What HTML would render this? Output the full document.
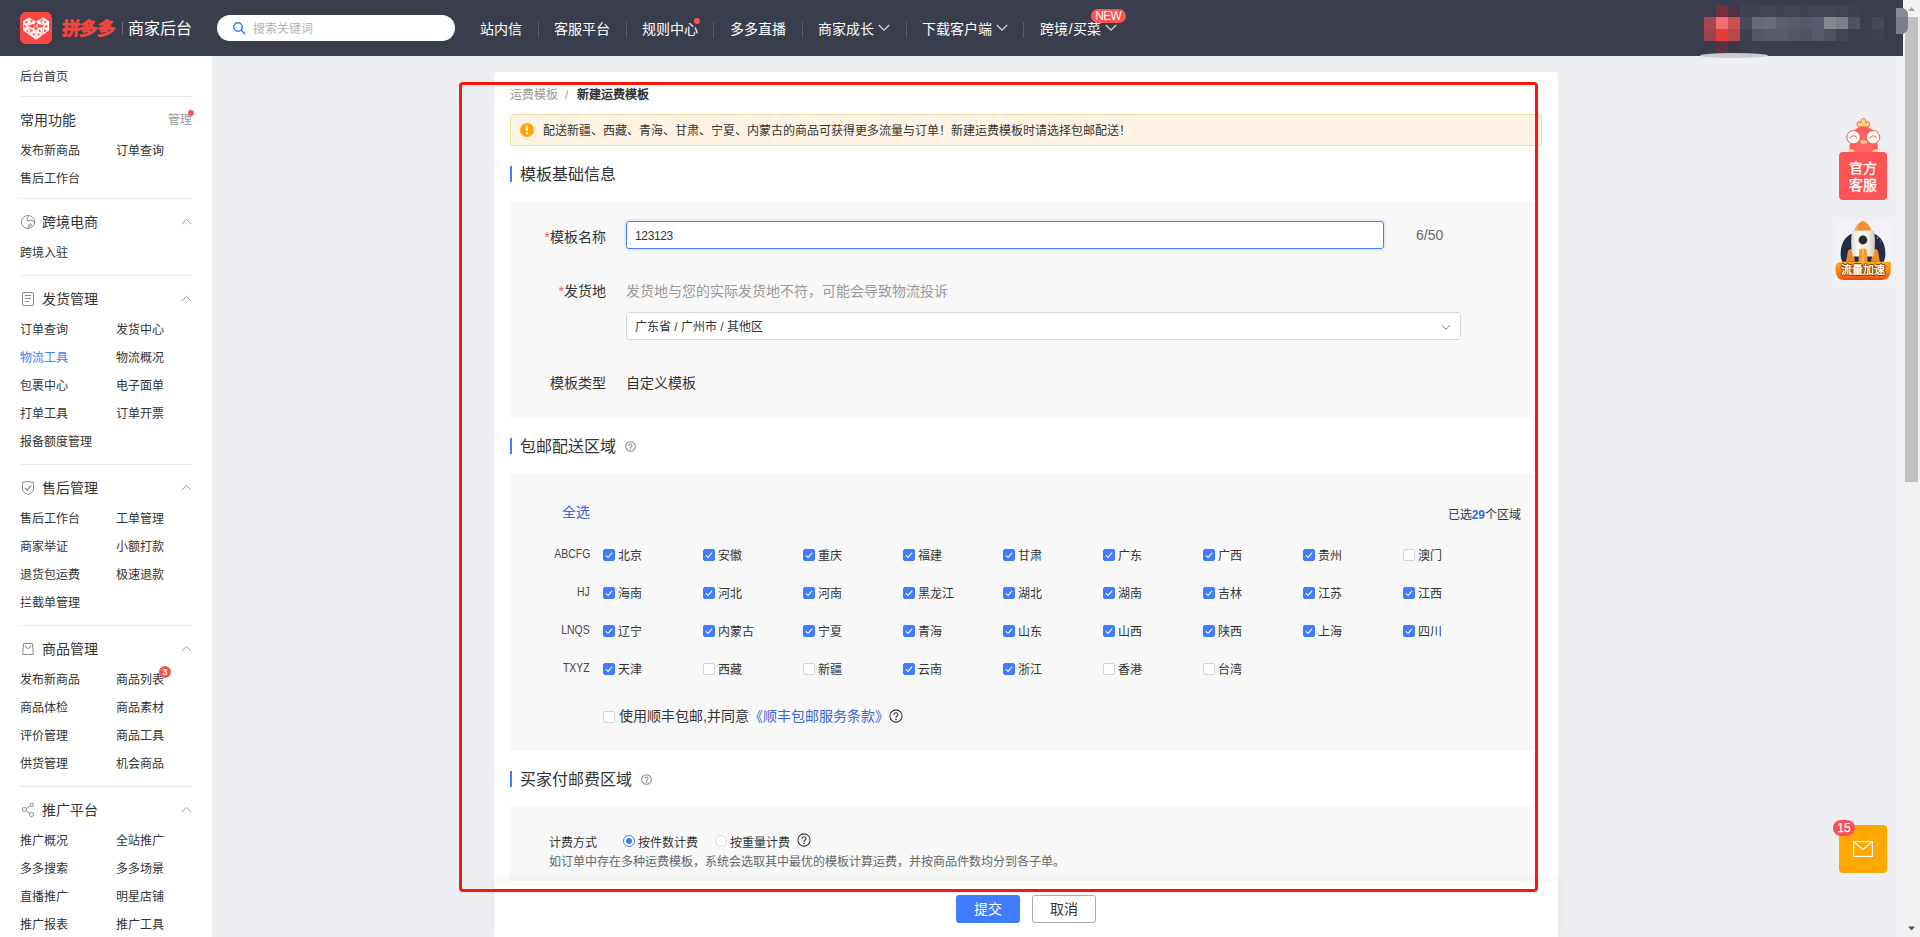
<!DOCTYPE html>
<html lang="zh-CN"><head><meta charset="utf-8"><title>新建运费模板</title>
<style>
*{box-sizing:border-box;margin:0;padding:0}
html,body{width:1920px;height:937px;overflow:hidden;background:#eeeff3}
body{position:relative;font-family:"Liberation Sans",sans-serif;font-size:12px;color:#333}
.t{position:absolute;white-space:nowrap}
.abs{position:absolute}
#top{position:absolute;left:0;top:0;width:1903px;height:56px;background:#3a3d4b}
#side{position:absolute;left:0;top:56px;width:212px;height:881px;background:#fff}
.hr{position:absolute;left:20px;width:172px;height:1px;background:#ebebeb}
#card{position:absolute;left:494px;top:72px;width:1064px;height:900px;background:#fff;border-radius:4px}
.panel{position:absolute;left:510px;width:1025px;background:#f8f8f9}
.bar{position:absolute;left:510px;width:2px;height:16px;background:#407cff}
.cb{position:absolute;width:12px;height:12px;border-radius:2px;background:#fff;border:1px solid #d4d4d4}
.cb.on{background:#407cff;border-color:#407cff}
.cb svg{position:absolute;left:-1px;top:-1px;width:12px;height:12px}
.sep{position:absolute;top:22px;width:1px;height:16px;background:#585b69}
</style></head><body>
<div id="top">
<div class="abs" style="left:20px;top:12px;width:32px;height:32px;border-radius:6px;background:#fb4744"></div>
<svg class="abs" style="left:20px;top:12px" width="32" height="32" viewBox="0 0 32 32"><path d="M3 9.3 L8.8 5.2 L16.1 9.7 L23.1 5.2 L29.1 9.3 L29.1 18.2 L16.1 27.8 L3 18.2 Z" fill="#fff"/><g fill="#fb4744"><path d="M16.1 9.6 L20 14 L16.1 18.2 L12.2 14 Z"/><path d="M13 11.8 L8.4 14 L13 16.2 Z M19.2 11.8 L23.8 14 L19.2 16.2 Z"/><g opacity=".92"><path d="M5.6 8.4 L8.2 10.8 L5.2 11.4Z M10.6 7.4 L13.2 8.6 L10.8 11Z M20 8.6 L22 7.6 L21.6 11Z M24 8.2 L26.8 9.6 L24.6 11.6Z"/><path d="M3.8 12.8 L7 14.2 L4 15.8Z M25.2 12.8 L28.4 14.2 L25.4 15.8Z"/><path d="M5.8 19 L8.2 17 L7.6 20.4Z M10.2 17 L12.8 18.6 L10.2 20.4Z M19.8 16.6 L21.2 20.4 L18.8 19.6Z M24 17 L27 18.6 L24.4 20.6Z"/><path d="M12.4 21 L15.4 21.4 L13.6 24Z M17.2 22 L19.8 21 L18.8 24.4Z"/></g></g><path d="M9.2 5.6 V22.4 M22.6 5.6 V22.4 M16.1 18 V27" stroke="#fb4744" stroke-width=".8" opacity=".5"/><path d="M5 9 L13 19 M27 9 L19 19 M4 17.5 L12 9.5 M28 17.5 L20 9.5 M9 22 L15 17.5 M23 22 L17 17.5" stroke="#fb4744" stroke-width=".6" opacity=".45"/><path d="M14.6 12.4 V15.8 M15.9 12.8 H18 M15.9 14.6 H18 M16.5 12.2 V16 M17.5 12.2 V16" stroke="#fff" stroke-width=".6" opacity=".8"/></svg>
<div class="t " style="left:61.5px;top:17px;height:24px;line-height:24px;font-size:18px;color:#f6443f;font-weight:900;letter-spacing:-0.2px;-webkit-text-stroke:0.8px #f6443f;transform:skewX(-3deg);transform-origin:left center;">拼多多</div>
<div class="abs" style="left:122px;top:22px;width:1px;height:13px;background:#6b6e7b"></div>
<div class="t " style="left:128px;top:17px;height:24px;line-height:24px;font-size:16px;color:#fff;">商家后台</div>
<div class="abs" style="left:217px;top:15px;width:238px;height:26px;border-radius:13px;background:#fff"></div>
<svg class="abs" style="left:232px;top:21px" width="14" height="14" viewBox="0 0 14 14"><circle cx="6" cy="6" r="4.3" fill="none" stroke="#3f7cf5" stroke-width="1.5"/><path d="M9.2 9.2 L12.6 12.6" stroke="#3f7cf5" stroke-width="1.6" stroke-linecap="round"/></svg>
<div class="t " style="left:253px;top:19px;height:20px;line-height:20px;font-size:12px;color:#b3b3b3;">搜索关键词</div>
<div class="t " style="left:480px;top:17px;height:24px;line-height:24px;font-size:14px;color:#fff;">站内信</div>
<div class="t " style="left:554px;top:17px;height:24px;line-height:24px;font-size:14px;color:#fff;">客服平台</div>
<div class="t " style="left:642px;top:17px;height:24px;line-height:24px;font-size:14px;color:#fff;">规则中心</div>
<div class="t " style="left:730px;top:17px;height:24px;line-height:24px;font-size:14px;color:#fff;">多多直播</div>
<div class="t " style="left:818px;top:17px;height:24px;line-height:24px;font-size:14px;color:#fff;">商家成长</div>
<div class="t " style="left:922px;top:17px;height:24px;line-height:24px;font-size:14px;color:#fff;">下载客户端</div>
<div class="t " style="left:1040px;top:17px;height:24px;line-height:24px;font-size:14px;color:#fff;">跨境<span style="padding:0 .8px">/</span>买菜</div>
<div class="sep" style="left:538px"></div>
<div class="sep" style="left:626px"></div>
<div class="sep" style="left:713px"></div>
<div class="sep" style="left:802px"></div>
<div class="sep" style="left:906px"></div>
<div class="sep" style="left:1023px"></div>
<svg class="abs" style="left:878px;top:24px" width="12" height="8" viewBox="0 0 12 8"><path d="M0.8 1 L6 6.2 L11.2 1" fill="none" stroke="#d6d6da" stroke-width="1.3"/></svg>
<svg class="abs" style="left:996px;top:24px" width="12" height="8" viewBox="0 0 12 8"><path d="M0.8 1 L6 6.2 L11.2 1" fill="none" stroke="#d6d6da" stroke-width="1.3"/></svg>
<svg class="abs" style="left:1105px;top:24px" width="12" height="8" viewBox="0 0 12 8"><path d="M0.8 1 L6 6.2 L11.2 1" fill="none" stroke="#d6d6da" stroke-width="1.3"/></svg>
<div class="abs" style="left:694px;top:18px;width:6px;height:6px;border-radius:3px;background:#ff5050"></div>
<div class="abs" style="left:1091px;top:9px;width:35px;height:14px;border-radius:7px;background:#ff5351;color:#fff;font-size:12px;line-height:15px;letter-spacing:-0.7px;text-align:center;padding-right:0.7px">NEW</div>
<div class="abs" style="left:1716px;top:5px;width:12px;height:12px;background:#782f3b"></div>
<div class="abs" style="left:1728px;top:5px;width:12px;height:12px;background:#4a3443"></div>
<div class="abs" style="left:1740px;top:5px;width:12px;height:12px;background:#40434f"></div>
<div class="abs" style="left:1752px;top:5px;width:12px;height:12px;background:#41444f"></div>
<div class="abs" style="left:1764px;top:5px;width:12px;height:12px;background:#42444f"></div>
<div class="abs" style="left:1776px;top:5px;width:12px;height:12px;background:#41434f"></div>
<div class="abs" style="left:1788px;top:5px;width:12px;height:12px;background:#42444f"></div>
<div class="abs" style="left:1800px;top:5px;width:12px;height:12px;background:#41434f"></div>
<div class="abs" style="left:1812px;top:5px;width:12px;height:12px;background:#42444f"></div>
<div class="abs" style="left:1824px;top:5px;width:12px;height:12px;background:#444651"></div>
<div class="abs" style="left:1836px;top:5px;width:12px;height:12px;background:#42444f"></div>
<div class="abs" style="left:1848px;top:5px;width:12px;height:12px;background:#3e414e"></div>
<div class="abs" style="left:1704px;top:17px;width:12px;height:12px;background:#a7484f"></div>
<div class="abs" style="left:1716px;top:17px;width:12px;height:12px;background:#ee7171"></div>
<div class="abs" style="left:1728px;top:17px;width:12px;height:12px;background:#c95152"></div>
<div class="abs" style="left:1740px;top:17px;width:12px;height:12px;background:#474a59"></div>
<div class="abs" style="left:1752px;top:17px;width:12px;height:12px;background:#666b79"></div>
<div class="abs" style="left:1764px;top:17px;width:12px;height:12px;background:#6a6e7b"></div>
<div class="abs" style="left:1776px;top:17px;width:12px;height:12px;background:#5c5f6f"></div>
<div class="abs" style="left:1788px;top:17px;width:12px;height:12px;background:#5a5a6b"></div>
<div class="abs" style="left:1800px;top:17px;width:12px;height:12px;background:#555867"></div>
<div class="abs" style="left:1812px;top:17px;width:12px;height:12px;background:#5a596f"></div>
<div class="abs" style="left:1824px;top:17px;width:12px;height:12px;background:#858791"></div>
<div class="abs" style="left:1836px;top:17px;width:12px;height:12px;background:#7c7e89"></div>
<div class="abs" style="left:1848px;top:17px;width:12px;height:12px;background:#505261"></div>
<div class="abs" style="left:1872px;top:17px;width:12px;height:12px;background:#474959"></div>
<div class="abs" style="left:1704px;top:29px;width:12px;height:12px;background:#9a444d"></div>
<div class="abs" style="left:1716px;top:29px;width:12px;height:12px;background:#ea3b3b"></div>
<div class="abs" style="left:1728px;top:29px;width:12px;height:12px;background:#b9484d"></div>
<div class="abs" style="left:1740px;top:29px;width:12px;height:12px;background:#3f4151"></div>
<div class="abs" style="left:1752px;top:29px;width:12px;height:12px;background:#545865"></div>
<div class="abs" style="left:1764px;top:29px;width:12px;height:12px;background:#585b68"></div>
<div class="abs" style="left:1776px;top:29px;width:12px;height:12px;background:#585b68"></div>
<div class="abs" style="left:1788px;top:29px;width:12px;height:12px;background:#525665"></div>
<div class="abs" style="left:1800px;top:29px;width:12px;height:12px;background:#4e5261"></div>
<div class="abs" style="left:1812px;top:29px;width:12px;height:12px;background:#585a67"></div>
<div class="abs" style="left:1824px;top:29px;width:12px;height:12px;background:#4e515f"></div>
<div class="abs" style="left:1836px;top:29px;width:12px;height:12px;background:#414452"></div>
<div class="abs" style="left:1872px;top:29px;width:12px;height:12px;background:#3f4251"></div>
<div class="abs" style="left:1716px;top:41px;width:12px;height:12px;background:#5c3441"></div>
<div class="abs" style="left:1728px;top:41px;width:12px;height:12px;background:#40384a"></div>
<div class="abs" style="left:1740px;top:41px;width:12px;height:12px;background:#3b3e4d"></div>
<div class="abs" style="left:1752px;top:41px;width:12px;height:12px;background:#3c3f4e"></div>
<div class="abs" style="left:1764px;top:41px;width:12px;height:12px;background:#3c3f4e"></div>
<div class="abs" style="left:1776px;top:41px;width:12px;height:12px;background:#3c3f4e"></div>
<div class="abs" style="left:1788px;top:41px;width:12px;height:12px;background:#3b3e4d"></div>
</div>
<div class="abs" style="left:1700px;top:53px;width:68px;height:5px;border-radius:50%;background:#c9ccd4"></div>
<div id="side"></div>
<div class="t " style="left:20px;top:67px;height:20px;line-height:20px;font-size:12px;color:#333;">后台首页</div>
<div class="hr" style="top:96px"></div>
<div class="t " style="left:20px;top:110px;height:20px;line-height:20px;font-size:14px;color:#333;">常用功能</div>
<div class="t " style="left:168px;top:110px;height:20px;line-height:20px;font-size:12px;color:#999;">管理</div>
<div class="abs" style="left:188px;top:110px;width:6px;height:6px;border-radius:3px;background:#ff5050"></div>
<div class="t " style="left:20px;top:141px;height:20px;line-height:20px;font-size:12px;color:#333;">发布新商品</div>
<div class="t " style="left:116px;top:141px;height:20px;line-height:20px;font-size:12px;color:#333;">订单查询</div>
<div class="t " style="left:20px;top:169px;height:20px;line-height:20px;font-size:12px;color:#333;">售后工作台</div>
<div class="hr" style="top:198px"></div>
<svg class="abs" style="left:20px;top:214px" width="16" height="16" viewBox="0 0 16 16" fill="none" stroke="#8c8c8c" stroke-width="1"><circle cx="8" cy="8" r="6.5"/><path d="M9 1.8 Q7.2 3.6 6.9 6 Q7.4 7.6 9 6.6 Q10.4 5.4 11.6 6.4 Q12.6 7.6 14.2 7 M8.2 14.4 Q8.1 12.4 8.9 11 Q9.6 9.6 11 9.8 Q12.2 10.4 11.2 11.8 Q10.2 12.8 9.2 12.2"/></svg>
<div class="t " style="left:42px;top:212px;height:20px;line-height:20px;font-size:14px;color:#333;">跨境电商</div>
<svg class="abs" style="left:181px;top:218px" width="11" height="7" viewBox="0 0 11 7"><path d="M0.8 6 L5.5 1.4 L10.2 6" fill="none" stroke="#9a9a9a" stroke-width="1"/></svg>
<div class="t " style="left:20px;top:243px;height:20px;line-height:20px;font-size:12px;color:#333;">跨境入驻</div>
<div class="hr" style="top:275px"></div>
<svg class="abs" style="left:20px;top:291px" width="16" height="16" viewBox="0 0 16 16" fill="none" stroke="#8c8c8c" stroke-width="1"><rect x="2.5" y="1.5" width="11" height="13" rx=".6"/><path d="M5 4.5 H11 M5 7.5 H11 M5 10.5 H9"/></svg>
<div class="t " style="left:42px;top:289px;height:20px;line-height:20px;font-size:14px;color:#333;">发货管理</div>
<svg class="abs" style="left:181px;top:295px" width="11" height="7" viewBox="0 0 11 7"><path d="M0.8 6 L5.5 1.4 L10.2 6" fill="none" stroke="#9a9a9a" stroke-width="1"/></svg>
<div class="t " style="left:20px;top:320px;height:20px;line-height:20px;font-size:12px;color:#333;">订单查询</div>
<div class="t " style="left:116px;top:320px;height:20px;line-height:20px;font-size:12px;color:#333;">发货中心</div>
<div class="t " style="left:20px;top:348px;height:20px;line-height:20px;font-size:12px;color:#407cff;">物流工具</div>
<div class="t " style="left:116px;top:348px;height:20px;line-height:20px;font-size:12px;color:#333;">物流概况</div>
<div class="t " style="left:20px;top:376px;height:20px;line-height:20px;font-size:12px;color:#333;">包裹中心</div>
<div class="t " style="left:116px;top:376px;height:20px;line-height:20px;font-size:12px;color:#333;">电子面单</div>
<div class="t " style="left:20px;top:404px;height:20px;line-height:20px;font-size:12px;color:#333;">打单工具</div>
<div class="t " style="left:116px;top:404px;height:20px;line-height:20px;font-size:12px;color:#333;">订单开票</div>
<div class="t " style="left:20px;top:432px;height:20px;line-height:20px;font-size:12px;color:#333;">报备额度管理</div>
<div class="hr" style="top:464px"></div>
<svg class="abs" style="left:20px;top:480px" width="16" height="16" viewBox="0 0 16 16" fill="none" stroke="#8c8c8c" stroke-width="1"><path d="M2.5 2.4 Q8 0.7 13.5 2.4 V9.6 C13.5 12 9.8 13.6 8 14.6 C6.2 13.6 2.5 12 2.5 9.6 Z"/><path d="M4.9 7.8 L7.1 10.2 L11.1 5.4" stroke-width="1.25"/></svg>
<div class="t " style="left:42px;top:478px;height:20px;line-height:20px;font-size:14px;color:#333;">售后管理</div>
<svg class="abs" style="left:181px;top:484px" width="11" height="7" viewBox="0 0 11 7"><path d="M0.8 6 L5.5 1.4 L10.2 6" fill="none" stroke="#9a9a9a" stroke-width="1"/></svg>
<div class="t " style="left:20px;top:509px;height:20px;line-height:20px;font-size:12px;color:#333;">售后工作台</div>
<div class="t " style="left:116px;top:509px;height:20px;line-height:20px;font-size:12px;color:#333;">工单管理</div>
<div class="t " style="left:20px;top:537px;height:20px;line-height:20px;font-size:12px;color:#333;">商家举证</div>
<div class="t " style="left:116px;top:537px;height:20px;line-height:20px;font-size:12px;color:#333;">小额打款</div>
<div class="t " style="left:20px;top:565px;height:20px;line-height:20px;font-size:12px;color:#333;">退货包运费</div>
<div class="t " style="left:116px;top:565px;height:20px;line-height:20px;font-size:12px;color:#333;">极速退款</div>
<div class="t " style="left:20px;top:593px;height:20px;line-height:20px;font-size:12px;color:#333;">拦截单管理</div>
<div class="hr" style="top:625px"></div>
<svg class="abs" style="left:20px;top:641px" width="16" height="16" viewBox="0 0 16 16" fill="none" stroke="#8c8c8c" stroke-width="1"><path d="M3.6 2.5 H12.4 L13.3 13.5 H2.7 Z"/><path d="M5.3 4.4 Q5.4 7.4 8 7.4 Q10.6 7.4 10.7 4.4"/></svg>
<div class="t " style="left:42px;top:639px;height:20px;line-height:20px;font-size:14px;color:#333;">商品管理</div>
<svg class="abs" style="left:181px;top:645px" width="11" height="7" viewBox="0 0 11 7"><path d="M0.8 6 L5.5 1.4 L10.2 6" fill="none" stroke="#9a9a9a" stroke-width="1"/></svg>
<div class="t " style="left:20px;top:670px;height:20px;line-height:20px;font-size:12px;color:#333;">发布新商品</div>
<div class="t " style="left:116px;top:670px;height:20px;line-height:20px;font-size:12px;color:#333;">商品列表</div>
<div class="t " style="left:20px;top:698px;height:20px;line-height:20px;font-size:12px;color:#333;">商品体检</div>
<div class="t " style="left:116px;top:698px;height:20px;line-height:20px;font-size:12px;color:#333;">商品素材</div>
<div class="t " style="left:20px;top:726px;height:20px;line-height:20px;font-size:12px;color:#333;">评价管理</div>
<div class="t " style="left:116px;top:726px;height:20px;line-height:20px;font-size:12px;color:#333;">商品工具</div>
<div class="t " style="left:20px;top:754px;height:20px;line-height:20px;font-size:12px;color:#333;">供货管理</div>
<div class="t " style="left:116px;top:754px;height:20px;line-height:20px;font-size:12px;color:#333;">机会商品</div>
<div class="abs" style="left:159px;top:666px;width:12px;height:12px;border-radius:6px;background:#ff5050;color:#fff;font-size:9.5px;font-weight:bold;line-height:12.5px;text-align:center">3</div>
<div class="hr" style="top:786px"></div>
<svg class="abs" style="left:20px;top:802px" width="16" height="16" viewBox="0 0 16 16" fill="none" stroke="#8c8c8c" stroke-width="1"><circle cx="11.9" cy="2.9" r="1.6"/><circle cx="4.4" cy="7.4" r="2"/><circle cx="11.45" cy="12.5" r="2.1"/><path d="M6.3 6.5 L10.4 3.7 M6.1 8.6 L9.6 11.4"/></svg>
<div class="t " style="left:42px;top:800px;height:20px;line-height:20px;font-size:14px;color:#333;">推广平台</div>
<svg class="abs" style="left:181px;top:806px" width="11" height="7" viewBox="0 0 11 7"><path d="M0.8 6 L5.5 1.4 L10.2 6" fill="none" stroke="#9a9a9a" stroke-width="1"/></svg>
<div class="t " style="left:20px;top:831px;height:20px;line-height:20px;font-size:12px;color:#333;">推广概况</div>
<div class="t " style="left:116px;top:831px;height:20px;line-height:20px;font-size:12px;color:#333;">全站推广</div>
<div class="t " style="left:20px;top:859px;height:20px;line-height:20px;font-size:12px;color:#333;">多多搜索</div>
<div class="t " style="left:116px;top:859px;height:20px;line-height:20px;font-size:12px;color:#333;">多多场景</div>
<div class="t " style="left:20px;top:887px;height:20px;line-height:20px;font-size:12px;color:#333;">直播推广</div>
<div class="t " style="left:116px;top:887px;height:20px;line-height:20px;font-size:12px;color:#333;">明星店铺</div>
<div class="t " style="left:20px;top:915px;height:20px;line-height:20px;font-size:12px;color:#333;">推广报表</div>
<div class="t " style="left:116px;top:915px;height:20px;line-height:20px;font-size:12px;color:#333;">推广工具</div>
<div id="card"></div>
<div class="t " style="left:510px;top:85px;height:20px;line-height:20px;font-size:12px;color:#999;">运费模板</div>
<div class="t " style="left:565px;top:85px;height:20px;line-height:20px;font-size:12px;color:#999;">/</div>
<div class="t " style="left:577px;top:85px;height:20px;line-height:20px;font-size:12px;color:#333;font-weight:bold;">新建运费模板</div>
<div class="abs" style="left:510px;top:114px;width:1032px;height:32px;background:#fff4e3;border:1px solid #fbd9a6;border-radius:3px"></div>
<svg class="abs" style="left:520px;top:123px" width="14" height="14" viewBox="0 0 14 14"><circle cx="7" cy="7" r="7" fill="#ffa80a"/><rect x="6.1" y="3" width="1.8" height="5.2" rx=".6" fill="#fff"/><circle cx="7" cy="10.3" r="1.05" fill="#fff"/></svg>
<div class="t " style="left:543px;top:121px;height:20px;line-height:20px;font-size:12px;color:#333;">配送新疆、西藏、青海、甘肃、宁夏、内蒙古的商品可获得更多流量与订单！新建运费模板时请选择包邮配送！</div>
<div class="bar" style="top:166px"></div>
<div class="t " style="left:520px;top:163px;height:24px;line-height:24px;font-size:16px;color:#333;">模板基础信息</div>
<div class="panel" style="top:202px;height:216px"></div>
<div class="t " style="right:1314px;top:227px;height:20px;line-height:20px;font-size:14px;color:#333;left:auto;"><span style="color:#ff4d4f">*</span>模板名称</div>
<div class="abs" style="left:626px;top:221px;width:758px;height:28px;background:#fff;border:1px solid #407cff;border-radius:3px;box-shadow:0 0 0 2px rgba(64,124,255,.09)"></div>
<div class="t " style="left:635px;top:226px;height:20px;line-height:20px;font-size:12px;color:#333;letter-spacing:-0.35px;">123123</div>
<div class="t " style="left:1416px;top:225px;height:20px;line-height:20px;font-size:14px;color:#666;">6/50</div>
<div class="t " style="right:1314px;top:281px;height:20px;line-height:20px;font-size:14px;color:#333;left:auto;"><span style="color:#ff4d4f">*</span>发货地</div>
<div class="t " style="left:626px;top:281px;height:20px;line-height:20px;font-size:14px;color:#999;">发货地与您的实际发货地不符，可能会导致物流投诉</div>
<div class="abs" style="left:626px;top:312px;width:835px;height:28px;background:#fff;border:1px solid #d9d9d9;border-radius:3px"></div>
<div class="t " style="left:635px;top:317px;height:20px;line-height:20px;font-size:12px;color:#333;">广东省 / 广州市 / 其他区</div>
<svg class="abs" style="left:1441px;top:324px" width="10" height="7" viewBox="0 0 10 7"><path d="M0.8 1 L5 5.2 L9.2 1" fill="none" stroke="#7a7a7a" stroke-width="1"/></svg>
<div class="t " style="right:1314px;top:373px;height:20px;line-height:20px;font-size:14px;color:#333;left:auto;">模板类型</div>
<div class="t " style="left:626px;top:373px;height:20px;line-height:20px;font-size:14px;color:#333;">自定义模板</div>
<div class="bar" style="top:438px"></div>
<div class="t " style="left:520px;top:435px;height:24px;line-height:24px;font-size:16px;color:#333;">包邮配送区域</div>
<svg class="abs" style="left:624.5px;top:441px" width="11" height="11" viewBox="0 0 16 16" fill="none" stroke="#888" stroke-width="1.45455"><circle cx="8" cy="8" r="7"/><path d="M5.7 6.4 Q5.8 4.2 8 4.2 Q10.3 4.2 10.3 6.2 Q10.3 7.4 8.9 8.2 Q8 8.8 8 9.9" stroke-linecap="round"/><circle cx="8" cy="12" r=".6" fill="#888" stroke-width="0.872727"/></svg>
<div class="panel" style="top:474px;height:277px"></div>
<div class="t " style="left:562px;top:502px;height:20px;line-height:20px;font-size:14px;color:#3b66d9;">全选</div>
<div class="t " style="right:399px;top:505px;height:20px;line-height:20px;font-size:12px;color:#333;left:auto;">已选<b style="color:#2f6fd6">29</b>个区域</div>
<div class="t " style="right:1330px;top:544px;height:20px;line-height:20px;font-size:12px;color:#444;left:auto;transform:scaleX(.87);transform-origin:right center;">ABCFG</div>
<div class="cb on" style="left:603px;top:549px"><svg viewBox="0 0 12 12"><path d="M2.9 6.3 L5.1 8.5 L9.1 3.6" fill="none" stroke="#fff" stroke-width="1.15"/></svg></div>
<div class="t " style="left:618px;top:546px;height:20px;line-height:20px;font-size:12px;color:#333;">北京</div>
<div class="cb on" style="left:703px;top:549px"><svg viewBox="0 0 12 12"><path d="M2.9 6.3 L5.1 8.5 L9.1 3.6" fill="none" stroke="#fff" stroke-width="1.15"/></svg></div>
<div class="t " style="left:718px;top:546px;height:20px;line-height:20px;font-size:12px;color:#333;">安徽</div>
<div class="cb on" style="left:803px;top:549px"><svg viewBox="0 0 12 12"><path d="M2.9 6.3 L5.1 8.5 L9.1 3.6" fill="none" stroke="#fff" stroke-width="1.15"/></svg></div>
<div class="t " style="left:818px;top:546px;height:20px;line-height:20px;font-size:12px;color:#333;">重庆</div>
<div class="cb on" style="left:903px;top:549px"><svg viewBox="0 0 12 12"><path d="M2.9 6.3 L5.1 8.5 L9.1 3.6" fill="none" stroke="#fff" stroke-width="1.15"/></svg></div>
<div class="t " style="left:918px;top:546px;height:20px;line-height:20px;font-size:12px;color:#333;">福建</div>
<div class="cb on" style="left:1003px;top:549px"><svg viewBox="0 0 12 12"><path d="M2.9 6.3 L5.1 8.5 L9.1 3.6" fill="none" stroke="#fff" stroke-width="1.15"/></svg></div>
<div class="t " style="left:1018px;top:546px;height:20px;line-height:20px;font-size:12px;color:#333;">甘肃</div>
<div class="cb on" style="left:1103px;top:549px"><svg viewBox="0 0 12 12"><path d="M2.9 6.3 L5.1 8.5 L9.1 3.6" fill="none" stroke="#fff" stroke-width="1.15"/></svg></div>
<div class="t " style="left:1118px;top:546px;height:20px;line-height:20px;font-size:12px;color:#333;">广东</div>
<div class="cb on" style="left:1203px;top:549px"><svg viewBox="0 0 12 12"><path d="M2.9 6.3 L5.1 8.5 L9.1 3.6" fill="none" stroke="#fff" stroke-width="1.15"/></svg></div>
<div class="t " style="left:1218px;top:546px;height:20px;line-height:20px;font-size:12px;color:#333;">广西</div>
<div class="cb on" style="left:1303px;top:549px"><svg viewBox="0 0 12 12"><path d="M2.9 6.3 L5.1 8.5 L9.1 3.6" fill="none" stroke="#fff" stroke-width="1.15"/></svg></div>
<div class="t " style="left:1318px;top:546px;height:20px;line-height:20px;font-size:12px;color:#333;">贵州</div>
<div class="cb" style="left:1403px;top:549px"></div>
<div class="t " style="left:1418px;top:546px;height:20px;line-height:20px;font-size:12px;color:#333;">澳门</div>
<div class="t " style="right:1330px;top:582px;height:20px;line-height:20px;font-size:12px;color:#444;left:auto;transform:scaleX(.87);transform-origin:right center;">HJ</div>
<div class="cb on" style="left:603px;top:587px"><svg viewBox="0 0 12 12"><path d="M2.9 6.3 L5.1 8.5 L9.1 3.6" fill="none" stroke="#fff" stroke-width="1.15"/></svg></div>
<div class="t " style="left:618px;top:584px;height:20px;line-height:20px;font-size:12px;color:#333;">海南</div>
<div class="cb on" style="left:703px;top:587px"><svg viewBox="0 0 12 12"><path d="M2.9 6.3 L5.1 8.5 L9.1 3.6" fill="none" stroke="#fff" stroke-width="1.15"/></svg></div>
<div class="t " style="left:718px;top:584px;height:20px;line-height:20px;font-size:12px;color:#333;">河北</div>
<div class="cb on" style="left:803px;top:587px"><svg viewBox="0 0 12 12"><path d="M2.9 6.3 L5.1 8.5 L9.1 3.6" fill="none" stroke="#fff" stroke-width="1.15"/></svg></div>
<div class="t " style="left:818px;top:584px;height:20px;line-height:20px;font-size:12px;color:#333;">河南</div>
<div class="cb on" style="left:903px;top:587px"><svg viewBox="0 0 12 12"><path d="M2.9 6.3 L5.1 8.5 L9.1 3.6" fill="none" stroke="#fff" stroke-width="1.15"/></svg></div>
<div class="t " style="left:918px;top:584px;height:20px;line-height:20px;font-size:12px;color:#333;">黑龙江</div>
<div class="cb on" style="left:1003px;top:587px"><svg viewBox="0 0 12 12"><path d="M2.9 6.3 L5.1 8.5 L9.1 3.6" fill="none" stroke="#fff" stroke-width="1.15"/></svg></div>
<div class="t " style="left:1018px;top:584px;height:20px;line-height:20px;font-size:12px;color:#333;">湖北</div>
<div class="cb on" style="left:1103px;top:587px"><svg viewBox="0 0 12 12"><path d="M2.9 6.3 L5.1 8.5 L9.1 3.6" fill="none" stroke="#fff" stroke-width="1.15"/></svg></div>
<div class="t " style="left:1118px;top:584px;height:20px;line-height:20px;font-size:12px;color:#333;">湖南</div>
<div class="cb on" style="left:1203px;top:587px"><svg viewBox="0 0 12 12"><path d="M2.9 6.3 L5.1 8.5 L9.1 3.6" fill="none" stroke="#fff" stroke-width="1.15"/></svg></div>
<div class="t " style="left:1218px;top:584px;height:20px;line-height:20px;font-size:12px;color:#333;">吉林</div>
<div class="cb on" style="left:1303px;top:587px"><svg viewBox="0 0 12 12"><path d="M2.9 6.3 L5.1 8.5 L9.1 3.6" fill="none" stroke="#fff" stroke-width="1.15"/></svg></div>
<div class="t " style="left:1318px;top:584px;height:20px;line-height:20px;font-size:12px;color:#333;">江苏</div>
<div class="cb on" style="left:1403px;top:587px"><svg viewBox="0 0 12 12"><path d="M2.9 6.3 L5.1 8.5 L9.1 3.6" fill="none" stroke="#fff" stroke-width="1.15"/></svg></div>
<div class="t " style="left:1418px;top:584px;height:20px;line-height:20px;font-size:12px;color:#333;">江西</div>
<div class="t " style="right:1330px;top:620px;height:20px;line-height:20px;font-size:12px;color:#444;left:auto;transform:scaleX(.87);transform-origin:right center;">LNQS</div>
<div class="cb on" style="left:603px;top:625px"><svg viewBox="0 0 12 12"><path d="M2.9 6.3 L5.1 8.5 L9.1 3.6" fill="none" stroke="#fff" stroke-width="1.15"/></svg></div>
<div class="t " style="left:618px;top:622px;height:20px;line-height:20px;font-size:12px;color:#333;">辽宁</div>
<div class="cb on" style="left:703px;top:625px"><svg viewBox="0 0 12 12"><path d="M2.9 6.3 L5.1 8.5 L9.1 3.6" fill="none" stroke="#fff" stroke-width="1.15"/></svg></div>
<div class="t " style="left:718px;top:622px;height:20px;line-height:20px;font-size:12px;color:#333;">内蒙古</div>
<div class="cb on" style="left:803px;top:625px"><svg viewBox="0 0 12 12"><path d="M2.9 6.3 L5.1 8.5 L9.1 3.6" fill="none" stroke="#fff" stroke-width="1.15"/></svg></div>
<div class="t " style="left:818px;top:622px;height:20px;line-height:20px;font-size:12px;color:#333;">宁夏</div>
<div class="cb on" style="left:903px;top:625px"><svg viewBox="0 0 12 12"><path d="M2.9 6.3 L5.1 8.5 L9.1 3.6" fill="none" stroke="#fff" stroke-width="1.15"/></svg></div>
<div class="t " style="left:918px;top:622px;height:20px;line-height:20px;font-size:12px;color:#333;">青海</div>
<div class="cb on" style="left:1003px;top:625px"><svg viewBox="0 0 12 12"><path d="M2.9 6.3 L5.1 8.5 L9.1 3.6" fill="none" stroke="#fff" stroke-width="1.15"/></svg></div>
<div class="t " style="left:1018px;top:622px;height:20px;line-height:20px;font-size:12px;color:#333;">山东</div>
<div class="cb on" style="left:1103px;top:625px"><svg viewBox="0 0 12 12"><path d="M2.9 6.3 L5.1 8.5 L9.1 3.6" fill="none" stroke="#fff" stroke-width="1.15"/></svg></div>
<div class="t " style="left:1118px;top:622px;height:20px;line-height:20px;font-size:12px;color:#333;">山西</div>
<div class="cb on" style="left:1203px;top:625px"><svg viewBox="0 0 12 12"><path d="M2.9 6.3 L5.1 8.5 L9.1 3.6" fill="none" stroke="#fff" stroke-width="1.15"/></svg></div>
<div class="t " style="left:1218px;top:622px;height:20px;line-height:20px;font-size:12px;color:#333;">陕西</div>
<div class="cb on" style="left:1303px;top:625px"><svg viewBox="0 0 12 12"><path d="M2.9 6.3 L5.1 8.5 L9.1 3.6" fill="none" stroke="#fff" stroke-width="1.15"/></svg></div>
<div class="t " style="left:1318px;top:622px;height:20px;line-height:20px;font-size:12px;color:#333;">上海</div>
<div class="cb on" style="left:1403px;top:625px"><svg viewBox="0 0 12 12"><path d="M2.9 6.3 L5.1 8.5 L9.1 3.6" fill="none" stroke="#fff" stroke-width="1.15"/></svg></div>
<div class="t " style="left:1418px;top:622px;height:20px;line-height:20px;font-size:12px;color:#333;">四川</div>
<div class="t " style="right:1330px;top:658px;height:20px;line-height:20px;font-size:12px;color:#444;left:auto;transform:scaleX(.87);transform-origin:right center;">TXYZ</div>
<div class="cb on" style="left:603px;top:663px"><svg viewBox="0 0 12 12"><path d="M2.9 6.3 L5.1 8.5 L9.1 3.6" fill="none" stroke="#fff" stroke-width="1.15"/></svg></div>
<div class="t " style="left:618px;top:660px;height:20px;line-height:20px;font-size:12px;color:#333;">天津</div>
<div class="cb" style="left:703px;top:663px"></div>
<div class="t " style="left:718px;top:660px;height:20px;line-height:20px;font-size:12px;color:#333;">西藏</div>
<div class="cb" style="left:803px;top:663px"></div>
<div class="t " style="left:818px;top:660px;height:20px;line-height:20px;font-size:12px;color:#333;">新疆</div>
<div class="cb on" style="left:903px;top:663px"><svg viewBox="0 0 12 12"><path d="M2.9 6.3 L5.1 8.5 L9.1 3.6" fill="none" stroke="#fff" stroke-width="1.15"/></svg></div>
<div class="t " style="left:918px;top:660px;height:20px;line-height:20px;font-size:12px;color:#333;">云南</div>
<div class="cb on" style="left:1003px;top:663px"><svg viewBox="0 0 12 12"><path d="M2.9 6.3 L5.1 8.5 L9.1 3.6" fill="none" stroke="#fff" stroke-width="1.15"/></svg></div>
<div class="t " style="left:1018px;top:660px;height:20px;line-height:20px;font-size:12px;color:#333;">浙江</div>
<div class="cb" style="left:1103px;top:663px"></div>
<div class="t " style="left:1118px;top:660px;height:20px;line-height:20px;font-size:12px;color:#333;">香港</div>
<div class="cb" style="left:1203px;top:663px"></div>
<div class="t " style="left:1218px;top:660px;height:20px;line-height:20px;font-size:12px;color:#333;">台湾</div>
<div class="cb" style="left:603px;top:711px"></div>
<div class="t " style="left:619px;top:706px;height:20px;line-height:20px;font-size:14px;color:#333;">使用顺丰包邮,并同意<span style="color:#3b66d9">《顺丰包邮服务条款》</span></div>
<svg class="abs" style="left:889px;top:709px" width="14" height="14" viewBox="0 0 16 16" fill="none" stroke="#333" stroke-width="1.2"><circle cx="8" cy="8" r="7"/><path d="M5.7 6.4 Q5.8 4.2 8 4.2 Q10.3 4.2 10.3 6.2 Q10.3 7.4 8.9 8.2 Q8 8.8 8 9.9" stroke-linecap="round"/><circle cx="8" cy="12" r=".6" fill="#333" stroke-width="0.685714"/></svg>
<div class="bar" style="top:771px"></div>
<div class="t " style="left:520px;top:768px;height:24px;line-height:24px;font-size:16px;color:#333;">买家付邮费区域</div>
<svg class="abs" style="left:640.5px;top:773.5px" width="11" height="11" viewBox="0 0 16 16" fill="none" stroke="#888" stroke-width="1.45455"><circle cx="8" cy="8" r="7"/><path d="M5.7 6.4 Q5.8 4.2 8 4.2 Q10.3 4.2 10.3 6.2 Q10.3 7.4 8.9 8.2 Q8 8.8 8 9.9" stroke-linecap="round"/><circle cx="8" cy="12" r=".6" fill="#888" stroke-width="0.872727"/></svg>
<div class="panel" style="top:807px;height:130px"></div>
<div class="t " style="left:549px;top:833px;height:20px;line-height:20px;font-size:12px;color:#333;">计费方式</div>
<div class="abs" style="left:623px;top:835px;width:12px;height:12px;border-radius:6px;border:1px solid #407cff;background:#fff"></div>
<div class="abs" style="left:626px;top:838px;width:6px;height:6px;border-radius:3px;background:#407cff"></div>
<div class="t " style="left:638px;top:833px;height:20px;line-height:20px;font-size:12px;color:#333;">按件数计费</div>
<div class="abs" style="left:715px;top:835px;width:12px;height:12px;border-radius:6px;border:1px solid #dcdcdc;background:#fff"></div>
<div class="t " style="left:730px;top:833px;height:20px;line-height:20px;font-size:12px;color:#333;">按重量计费</div>
<svg class="abs" style="left:797px;top:833px" width="14" height="14" viewBox="0 0 16 16" fill="none" stroke="#333" stroke-width="1.2"><circle cx="8" cy="8" r="7"/><path d="M5.7 6.4 Q5.8 4.2 8 4.2 Q10.3 4.2 10.3 6.2 Q10.3 7.4 8.9 8.2 Q8 8.8 8 9.9" stroke-linecap="round"/><circle cx="8" cy="12" r=".6" fill="#333" stroke-width="0.685714"/></svg>
<div class="t " style="left:549px;top:852px;height:20px;line-height:20px;font-size:12px;color:#666;">如订单中存在多种运费模板，系统会选取其中最优的模板计算运费，并按商品件数均分到各子单。</div>
<div class="abs" style="left:494px;top:881px;width:1064px;height:56px;background:#fff;box-shadow:0 -3px 8px rgba(0,0,0,.05)"></div>
<div class="abs" style="left:956px;top:895px;width:64px;height:28px;border-radius:3px;background:#407cff;color:#fff;font-size:14px;line-height:28px;text-align:center">提交</div>
<div class="abs" style="left:1032px;top:895px;width:64px;height:28px;border-radius:3px;background:#fff;border:1px solid #a8a8a8;color:#333;font-size:14px;line-height:26px;text-align:center">取消</div>
<div class="abs" style="left:459px;top:82px;width:1079px;height:810px;border:3px solid #ff160a;border-radius:4px"></div>
<svg class="abs" style="left:1844px;top:116px" width="40" height="38" viewBox="0 0 40 38"><path d="M13.2 9.4 Q12.4 6.2 14.6 5.6 Q16 5.4 16.8 7 Q16.6 2.4 19.4 2.4 Q22.2 2.4 22 7 Q22.8 5.4 24.2 5.6 Q26.4 6.2 25.6 9.4 L24.6 11 L14.2 11Z" fill="#fdd67c" stroke="#ee5b5e" stroke-width=".9"/><path d="M5.4 36 Q5.2 30 6.4 24 Q8 11.2 19.5 10.6 Q31 11.2 32.8 24 Q34 30 33.8 36 Z" fill="#fd5b5f"/><path d="M9 36 Q9 20 19.5 15 Q30 20 30 36Z" fill="#ff6a6c" opacity=".55"/><circle cx="9.5" cy="21.2" r="6.7" fill="#fffaee" stroke="#ea4a52" stroke-width=".9"/><circle cx="29.1" cy="21.2" r="6.7" fill="#fffaee" stroke="#ea4a52" stroke-width=".9"/><path d="M6.2 21.8 Q9.5 17.6 12.8 21.8 M25.8 21.8 Q29.1 17.6 32.4 21.8" fill="none" stroke="#f26d78" stroke-width="1.1" stroke-linecap="round"/><path d="M15.9 24.8 Q19.6 23.6 23.3 24.8 Q22.4 28.2 19.6 28.2 Q16.8 28.2 15.9 24.8Z" fill="#fdd67c" stroke="#f08d5a" stroke-width=".4"/><path d="M4.4 36 Q5 33 7.6 33 Q10.2 33.2 10.8 36Z M28.2 36 Q28.8 33.2 31.4 33 Q34 33 34.6 36Z" fill="#fdd67c"/></svg>
<div class="abs" style="left:1839px;top:152px;width:48px;height:48px;border-radius:4px;background:#fe5455;color:#fff;font-size:14px;line-height:17.5px;text-align:center;padding-top:7.5px;-webkit-text-stroke:.35px #fff">官方<br>客服</div>
<svg class="abs" style="left:1835px;top:220px" width="57" height="61" viewBox="0 0 57 61"><defs><linearGradient id="bn" x1="0" y1="0" x2="0" y2="1"><stop offset="0" stop-color="#f9ad22"/><stop offset=".55" stop-color="#f5820f"/><stop offset=".8" stop-color="#f2690e"/><stop offset="1" stop-color="#ee420b"/></linearGradient><linearGradient id="bd" x1="0" y1="0" x2="1" y2="0"><stop offset="0" stop-color="#d9dccf"/><stop offset=".3" stop-color="#fbfaf4"/><stop offset=".75" stop-color="#efeadf"/><stop offset="1" stop-color="#cfc9bb"/></linearGradient></defs><rect x="0" y="0" width="57" height="61" fill="#f1f2f5"/><path d="M28 10.5 Q50.4 13 50.4 34 Q50.4 50 28 50 Q5.6 50 5.6 34 Q5.6 13 28 10.5Z" fill="#262b47"/><circle cx="42.5" cy="18" r=".7" fill="#fff" opacity=".8"/><circle cx="45.2" cy="21.4" r=".5" fill="#fff" opacity=".7"/><path d="M11 42 L13 31 Q14 28.6 17.5 28.8 L20 41.6Z M45 42 L43 31 Q42 28.6 38.5 28.8 L36 41.6Z" fill="#f28a25"/><path d="M17 12 Q16.4 10.2 19 10.2 L37 10.2 Q39.6 10.2 39.2 12 Q41 24 38.4 36.6 L17.8 36.6 Q15 24 17 12Z" fill="url(#bd)"/><path d="M19.6 10.4 Q21.4 3.6 27.8 0.7 Q34.4 3.6 36.4 10.4 Z" fill="#f28e2e"/><path d="M19.6 10.4 Q21 5.6 24.4 2.8 Q22.6 6.6 22.4 10.4Z" fill="#f6ab5c"/><circle cx="28" cy="20" r="6.3" fill="#f3f1ea"/><circle cx="28" cy="20" r="4.4" fill="#2c2c33"/><path d="M24.4 29.6 Q28 27.4 31.6 29.6 L32.6 42 L23.4 42Z" fill="#f4962f"/><path d="M27 28.6 H29 V42 H27Z" fill="#f9b95c"/><path d="M0.5 47.6 Q0.5 42 7 41.8 L55.8 41.8 L55.8 50 Q55.8 60 46 60 L10 60 Q0.5 60 0.5 50Z" fill="url(#bn)"/></svg>
<div class="t " style="left:1841px;top:263px;height:14px;line-height:14px;font-size:11px;color:#fff6e4;font-weight:bold;text-shadow:0 0 1px #8a3c00,0 1px 0 #8a3c00,1px 0 0 #8a3c00,-1px 0 0 #8a3c00,0 -1px 0 #8a3c00;">流量加速</div>
<div class="abs" style="left:1839px;top:825px;width:48px;height:48px;border-radius:4px;background:#ffa800"></div>
<svg class="abs" style="left:1853px;top:841px" width="20" height="16" viewBox="0 0 20 16"><rect x=".6" y=".6" width="18.8" height="14.8" fill="none" stroke="#fff" stroke-width="1.2"/><path d="M1 1 L10 8.4 L19 1" fill="none" stroke="#fff" stroke-width="1.2"/></svg>
<div class="abs" style="left:1833px;top:820px;width:22px;height:16px;border-radius:8px;background:#fb5058;color:#fff;font-size:12px;line-height:16px;text-align:center;-webkit-text-stroke:.25px #fff">15</div>
<div class="abs" style="left:1903px;top:0;width:17px;height:937px;background:#f1f1f1"></div>
<div class="abs" style="left:1905px;top:17px;width:13px;height:465px;background:#c1c1c1"></div>
<svg class="abs" style="left:1903px;top:0" width="17" height="17" viewBox="0 0 17 17"><path d="M5 11 L8.5 7 L12 11Z" fill="#a3a3a3"/></svg>
<svg class="abs" style="left:1903px;top:920px" width="17" height="17" viewBox="0 0 17 17"><path d="M5 6.5 L8.5 10.5 L12 6.5Z" fill="#505050"/></svg>
<div class="abs" style="left:1896px;top:8px;width:12px;height:26px;border-radius:0 7px 7px 0;background:#7b7e8a;overflow:hidden"><div style="height:9px;background:#888b96"></div></div>
</body></html>
